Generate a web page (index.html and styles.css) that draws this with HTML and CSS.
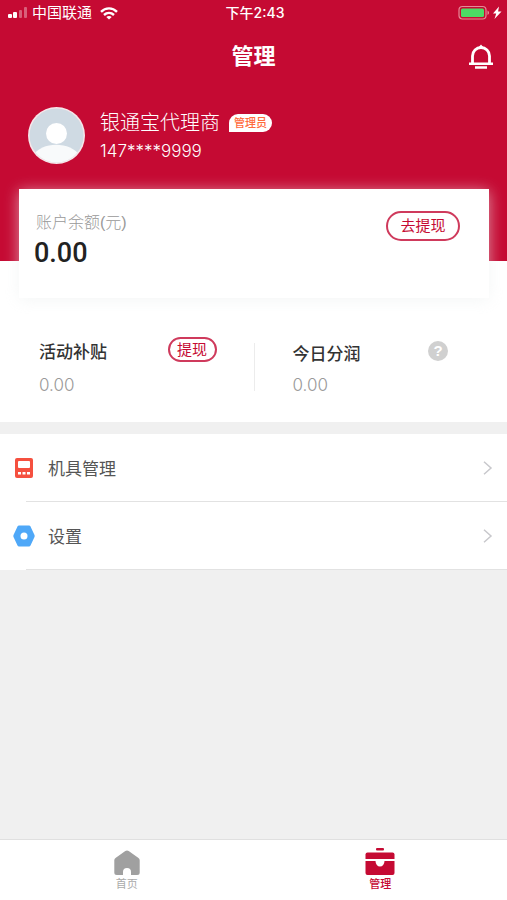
FILE: index.html
```html
<!DOCTYPE html>
<html lang="zh-CN">
<head>
    <meta charset="UTF-8">
    <meta name="viewport" content="width=device-width, initial-scale=1.0">
    <title>管理</title>
    <link rel="stylesheet" href="styles.css">
</head>
<body>
    <header class="header">
        <div class="status-bar">
            <div class="carrier">
                <svg width="20" height="12" viewBox="0 0 20 12" fill="#fff">
                    <rect x="0" y="7" width="4" height="4" rx="1"/>
                    <rect x="5" y="5" width="4" height="6" rx="1"/>
                    <rect x="11" y="3" width="3" height="8" rx="1" opacity=".35"/>
                    <rect x="16" y="0" width="3" height="11" rx="1" opacity=".35"/>
                </svg>
                <span>中国联通</span>
                <svg class="wifi" width="18" height="13" viewBox="0 0 18 13" fill="none" stroke="#fff" stroke-width="2.4">
                    <path d="M1 4.8C5.5.2 12.5.2 17 4.8"/>
                    <path d="M4 8c3-2.800 7-2.800 10 0"/>
                    <path d="M9 12.600 6.300 9.900c1.500-1.300 3.900-1.300 5.400 0z" fill="#fff" stroke="none"/>
                </svg>
            </div>
            <span class="time">下午2:43</span>
            <div class="battery">
                <svg width="44" height="16" viewBox="0 0 44 16">
                    <rect x="1" y="1.500" width="27" height="12.500" rx="3.500" fill="none" stroke="#e58a97" stroke-width="1.200"/>
                    <rect x="3" y="3.500" width="23" height="8.500" rx="1.500" fill="#4cd964"/>
                    <path d="M29.500 5.500c2 .8 2 3.700 0 4.500z" fill="#e58a97"/>
                    <path d="M41 1.500 35 8.500h3.200L36.500 14l7-7.500h-3.400z" fill="#fff"/>
                </svg>
            </div>
        </div>
        <div class="title-bar">
            <h1>管理</h1>
            <button class="bell" type="button" aria-label="通知">
                <svg width="26" height="26" viewBox="0 0 26 26" fill="none" stroke="#fff" stroke-width="2.800">
                    <path d="M4.500 20V12a8.500 8.500 0 0 1 17 0v8"/>
                    <path d="M1 19.800h24M7 23.500h12" stroke-width="2.600"/>
                    <path d="M10 4 13 .5 16 4z" fill="#fff" stroke="none"/>
                </svg>
            </button>
        </div>
        <div class="profile">
            <svg class="avatar" width="57" height="57" viewBox="0 0 57 57">
                <defs>
                    <clipPath id="face"><circle cx="28.500" cy="28.500" r="27"/></clipPath>
                </defs>
                <circle cx="28.500" cy="28.500" r="28.500" fill="#f6e6e9"/>
                <circle cx="28.500" cy="28.500" r="27" fill="#cfdae3"/>
                <circle cx="28.500" cy="26.500" r="10.500" fill="#fff"/>
                <path d="M5 49c8-15 38-15 47 0v9H5z" fill="#f8fafb" clip-path="url(#face)"/>
            </svg>
            <div class="profile-info">
                <div class="profile-name">
                    <span>银通宝代理商</span>
                    <span class="role">管理员</span>
                </div>
                <div class="phone">147****9999</div>
            </div>
        </div>
    </header>

    <main>
        <section class="balance">
            <div>
                <div class="balance-label">账户余额(元)</div>
                <div class="balance-amount">0.00</div>
            </div>
            <button class="btn btn-large" type="button">去提现</button>
        </section>

        <section class="stats">
            <div class="stat">
                <div class="stat-head">
                    <h2>活动补贴</h2>
                    <button class="btn btn-small" type="button">提现</button>
                </div>
                <div class="stat-value">0.00</div>
            </div>
            <div class="stat stat-profit">
                <div class="stat-head">
                    <h2>今日分润</h2>
                    <button class="help" type="button" aria-label="说明">?</button>
                </div>
                <div class="stat-value">0.00</div>
            </div>
        </section>

        <ul class="menu">
            <li>
                <a href="#">
                    <svg width="22" height="22" viewBox="0 0 22 22">
                        <rect x="2" y="1" width="18" height="20" rx="2" fill="#f5503f"/>
                        <rect x="5" y="4" width="12" height="7" rx="1" fill="#fff"/>
                        <path d="M5 15h3v2.500H5zM9.500 15h3v2.500h-3zM14 15h3v2.500h-3z" fill="#fff"/>
                    </svg>
                    <span>机具管理</span>
                    <svg class="arrow" width="10" height="14" viewBox="0 0 10 14" fill="none" stroke="#c8c8cc" stroke-width="1.500">
                        <path d="m1 .8 7 6.200-7 6.200"/>
                    </svg>
                </a>
            </li>
            <li>
                <a href="#">
                    <svg width="22" height="22" viewBox="0 0 22 22">
                        <path d="M6 .5h10q1 0 1.500.9l4 8.700q.4.900 0 1.800l-4 8.700q-.5.900-1.500.9H6q-1 0-1.500-.9l-4-8.700q-.4-.9 0-1.800l4-8.700Q5 .5 6 .5z" fill="#4fa8f8"/>
                        <circle cx="11" cy="11" r="3.500" fill="#fff"/>
                    </svg>
                    <span>设置</span>
                    <svg class="arrow" width="10" height="14" viewBox="0 0 10 14" fill="none" stroke="#c8c8cc" stroke-width="1.500">
                        <path d="m1 .8 7 6.200-7 6.200"/>
                    </svg>
                </a>
            </li>
        </ul>
    </main>

    <nav class="tab-bar">
        <a href="#">
            <svg width="28" height="26" viewBox="0 0 28 26">
                <path d="M12.300 1q1.700-1.200 3.400 0L25.500 8q1.200.9 1.200 2.300V22.500q0 2.500-2.500 2.500H18V22a4 4 0 0 0-8 0v3H3.800q-2.500 0-2.500-2.500V10.300q0-1.400 1.200-2.300z" fill="#a0a0a0"/>
            </svg>
            <span>首页</span>
        </a>
        <a class="active" href="#">
            <svg width="30" height="28" viewBox="0 0 30 28" fill="#c50a33">
                <rect x="11" y="0" width="8" height="2.500" rx="1"/>
                <path d="M2.500 4.500h25q2 0 2 2V11H.5V6.500q0-2 2-2z"/>
                <path d="M.5 13H10.500a4.500 5.500 0 0 0 9 0h10v12q0 2-2 2h-25q-2 0-2-2z"/>
            </svg>
            <span>管理</span>
        </a>
    </nav>
</body>
</html>
```
FILE: styles.css
```css
/* Global styles */
* {
    box-sizing: border-box;
}

body {
    font-family: "Liberation Sans", "Noto Sans CJK SC", sans-serif;
    margin: 0;
    min-height: 100vh;
    display: flex;
    flex-direction: column;
    background-color: #f0f0f0;
    color: #333;
}

h1, h2, ul {
    margin: 0;
    padding: 0;
}

button {
    font-family: inherit;
    padding: 0;
    border: none;
    background: none;
    cursor: pointer;
}

a {
    color: inherit;
    text-decoration: none;
}

svg {
    display: block;
    flex-shrink: 0;
}

/* Header styles */
.header {
    background-color: #c50a33;
    color: #fff;
    padding-bottom: 97px;
}

.status-bar {
    display: grid;
    grid-template-columns: 1fr auto 1fr;
    align-items: center;
    height: 26px;
    padding: 0 5px 0 8px;
    font-family: Inter, "Noto Sans CJK SC", sans-serif;
    font-size: 15px;
    line-height: 20px;
}

.carrier {
    display: flex;
    align-items: center;
    gap: 4px;
}

.wifi {
    margin-left: 4px;
}

.time {
    font-size: 14px;
    font-weight: 500;
    letter-spacing: normal;
}

.battery {
    display: flex;
    justify-content: flex-end;
}

.title-bar {
    display: grid;
    grid-template-columns: 1fr auto 1fr;
    align-items: center;
    height: 58px;
    padding: 4px 13px 0;
}

.title-bar h1 {
    grid-column: 2;
    font-size: 22px;
    line-height: 32px;
    font-weight: bold;
}

.bell {
    justify-self: end;
}

.profile {
    display: flex;
    gap: 15px;
    padding: 23px 28px 0;
}

.profile-info {
    padding-top: 1px;
}

.profile-name {
    display: flex;
    align-items: center;
    gap: 9px;
    font-size: 20px;
    line-height: 30px;
    font-weight: 300;
}

.role {
    padding: 0 5px;
    border-radius: 9px 9px 9px 0;
    background-color: #fff;
    color: #ff6b3d;
    font-size: 11px;
    line-height: 18px;
    font-weight: 500;
}

.phone {
    font-family: Inter, sans-serif;
    font-size: 17px;
    line-height: 26px;
    font-weight: 300;
}

/* Balance card */
main {
    flex: 1;
}

.balance {
    position: relative;
    display: flex;
    justify-content: space-between;
    align-items: flex-start;
    margin: -72px 18px 0 19px;
    padding: 22px 29px 27px 15px;
    background-color: #fff;
    box-shadow: 0 2px 14px rgba(236, 240, 240, 0.6);
}

.balance-label {
    padding-left: 2px;
    color: #999;
    font-size: 16px;
    line-height: 24px;
    font-weight: 300;
}

.balance-amount {
    font-family: Roboto, sans-serif;
    font-size: 27px;
    line-height: 36px;
    font-weight: 500;
    color: #222;
}

.btn {
    border: 2px solid #cf3a5c;
    border-radius: 15px;
    color: #c50a33;
}

.btn-large {
    width: 74px;
    height: 30px;
    font-size: 15px;
    line-height: 24px;
}

.btn-small {
    width: 49px;
    height: 25px;
    font-size: 15px;
    line-height: 20px;
}

/* Stats */
.stats {
    display: grid;
    grid-template-columns: 1fr 1fr;
    margin-top: -37px;
    padding: 76px 0 25px;
    background-color: #fff;
}

.stat {
    padding: 0 37px 0 39px;
}

.stat-profit {
    padding-right: 59px;
    background: linear-gradient(#ececec, #ececec) no-repeat left center / 1px 48px;
}

.stat-head {
    display: flex;
    justify-content: space-between;
    align-items: flex-start;
    height: 32px;
}

.stat-head h2 {
    padding-top: 2px;
    font-size: 17px;
    line-height: 28px;
    font-weight: 500;
}

.stat-profit h2 {
    padding-top: 4px;
}

.stat-value {
    margin-top: 4px;
    font-family: Inter, sans-serif;
    font-size: 17px;
    line-height: 24px;
    font-weight: 300;
    color: #999;
}

.help {
    width: 20px;
    height: 20px;
    margin-top: 4px;
    border-radius: 50%;
    background-color: #d0d0d0;
    color: #fff;
    font-size: 15px;
    line-height: 20px;
    font-weight: bold;
}

/* Menu */
.menu {
    margin-top: 12px;
    list-style: none;
    background-color: #fff;
}

.menu a {
    display: flex;
    align-items: center;
    height: 67px;
    padding: 0 14px 0 13px;
    gap: 13px;
    font-size: 17px;
    color: #555;
}

.menu li::after {
    content: "";
    display: block;
    height: 1px;
    margin-left: 26px;
    background-color: #e2e2e2;
}

.arrow {
    margin-left: auto;
}

/* Tab bar */
.tab-bar {
    display: grid;
    grid-template-columns: 1fr 1fr;
    height: 61px;
    border-top: 1px solid #e0e0e0;
    background-color: #fff;
}

.tab-bar a {
    display: flex;
    flex-direction: column;
    align-items: center;
    justify-content: flex-end;
    padding-bottom: 8px;
    color: #aaa;
    font-size: 11px;
    line-height: 16px;
}

.tab-bar .active {
    color: #c50a33;
    font-weight: 500;
}
```
